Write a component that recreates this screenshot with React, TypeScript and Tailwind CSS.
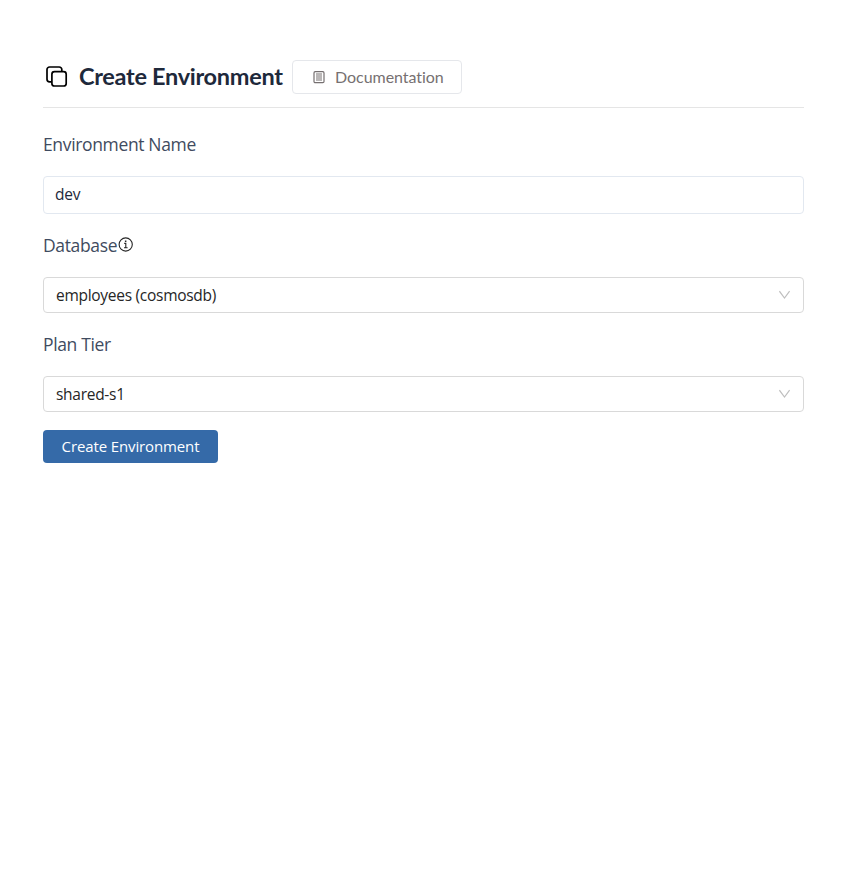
import type { ReactNode } from 'react';

function CopyIcon() {
  return (
    <svg className="ml-[3px] h-[22px] w-[22px] shrink-0" viewBox="0 0 22 22" fill="none" stroke="#000" strokeWidth="1.7" strokeLinejoin="round">
      <rect x="5.9" y="5.7" width="14.3" height="14.3" rx="2.6" />
      <path d="M15.8 5.5V3.6A2.6 2.6 0 0 0 13.2 1H3.6A2.6 2.6 0 0 0 1 3.6v9.6a2.6 2.6 0 0 0 2.6 2.6h2.1" />
    </svg>
  );
}

function DocumentIcon() {
  return (
    <svg className="h-[13px] w-3 shrink-0" viewBox="0 0 12 13" fill="none" stroke="#767071">
      <rect x="1" y=".7" width="10" height="11" rx="1.2" strokeWidth="1.2" />
      <path d="M3 3h6M3 5h6M3 7h6M3 9h6" strokeWidth="1" />
    </svg>
  );
}

function InfoIcon() {
  return (
    <svg className="mb-px ml-px h-[15px] w-[15px] shrink-0" viewBox="0 0 15 15" fill="none" stroke="#262626">
      <circle cx="7.7" cy="7.5" r="6.6" strokeWidth="1.1" />
      <path d="M6.2 6.4h1.6v4.3M6 10.7h3.6" strokeWidth="1.1" />
      <rect x="6.9" y="3.5" width="1.5" height="1.5" fill="#262626" stroke="none" />
    </svg>
  );
}

function Chevron() {
  return (
    <svg className="h-2.5 w-3 shrink-0" viewBox="0 0 12 10" fill="none" stroke="#bfbfbf" strokeWidth="1.2">
      <path d="M.4 1.2 5.5 8.1l5.1-6.9" />
    </svg>
  );
}

function Label({ children }: { children: ReactNode }) {
  return <div className="flex h-7 items-center text-[17.5px] tracking-[-0.35px] text-[#3f4b60]">{children}</div>;
}

function Select({ value }: { value: string }) {
  return (
    <div className="flex h-9 items-center justify-between rounded-[4px] border border-[#d9d9d9] pl-3 pr-3 text-[15.5px] text-[#262626]">
      <span className="pt-0.5 tracking-[-0.28px]">{value}</span>
      <Chevron />
    </div>
  );
}

export default function App() {
  return (
    <main className="min-h-[888px] bg-white pl-[43px] pr-[51px] pt-[60px] font-['Open_Sans','Noto_Sans',sans-serif]">
      <header className="flex h-12 items-start border-b border-[#e5e5e5] font-[Lato,sans-serif]">
        <div className="flex h-[34px] items-center">
          <CopyIcon />
          <h1 className="ml-[11px] w-[213px] whitespace-nowrap pb-0.5 text-[23.5px] font-bold leading-8 tracking-[-0.3px] text-[#1e293b]">Create Environment</h1>
          <button className="flex h-[34px] w-[170px] items-center gap-2.5 rounded-[4px] border border-[#e5e7eb] pl-5 text-[16px] text-[#767071] [font-variant-ligatures:none]">
            <DocumentIcon />
            <span className="tracking-[-0.04px]">Documentation</span>
          </button>
        </div>
      </header>
      <div className="mt-[22px]">
        <Label>Environment Name</Label>
        <div className="mt-[18px] flex h-[38px] items-center rounded-[4px] border border-[#e2e8f0] pl-[11px] text-[15.5px] tracking-[-0.28px] text-[#1e293b]">dev</div>
      </div>
      <div className="mt-[17px]">
        <Label>
          Database
          <InfoIcon />
        </Label>
        <div className="mt-[18px]"><Select value="employees (cosmosdb)" /></div>
      </div>
      <div className="mt-[17px]">
        <Label>Plan Tier</Label>
        <div className="mt-[18px]"><Select value="shared-s1" /></div>
      </div>
      <button className="mt-[18px] flex h-[33px] w-[175px] items-center justify-center rounded-[4px] bg-[#356aa8] text-[15px] font-medium tracking-[-0.12px] text-white">Create Environment</button>
    </main>
  );
}
